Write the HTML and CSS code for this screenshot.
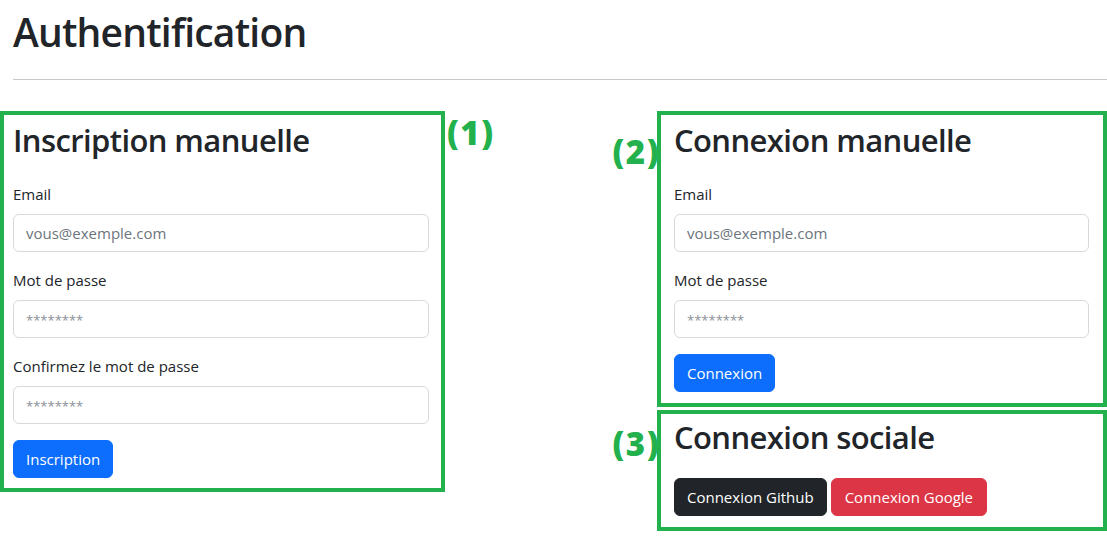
FILE: index.html
```html
<!DOCTYPE html>
<html lang="fr">
<head>
<meta charset="utf-8">
<title>Authentification</title>
<link rel="stylesheet" href="styles.css">
</head>
<body>
<header class="page-head">
  <h1 class="page-title">Authentification</h1>
  <hr class="page-rule">
</header>
<main class="columns">
  <section class="box box-signup">
    <span class="tag tag-right">(1)</span>
    <h2 class="box-title">Inscription manuelle</h2>
    <form class="form">
      <div class="field">
        <label class="label">Email</label>
        <input class="input" type="email" placeholder="vous@exemple.com">
      </div>
      <div class="field">
        <label class="label">Mot de passe</label>
        <input class="input" type="password" placeholder="********">
      </div>
      <div class="field">
        <label class="label">Confirmez le mot de passe</label>
        <input class="input" type="password" placeholder="********">
      </div>
      <button class="btn btn-primary" type="button">Inscription</button>
    </form>
  </section>
  <div class="right-col">
    <section class="box box-login">
      <span class="tag tag-left tag-2">(2)</span>
      <h2 class="box-title">Connexion manuelle</h2>
      <form class="form">
        <div class="field">
          <label class="label">Email</label>
          <input class="input" type="email" placeholder="vous@exemple.com">
        </div>
        <div class="field">
          <label class="label">Mot de passe</label>
          <input class="input" type="password" placeholder="********">
        </div>
        <button class="btn btn-primary" type="button">Connexion</button>
      </form>
    </section>
    <section class="box box-social">
      <span class="tag tag-left tag-3">(3)</span>
      <h2 class="box-title">Connexion sociale</h2>
      <div class="social-btns">
        <button class="btn btn-dark" type="button">Connexion Github</button>
        <button class="btn btn-danger" type="button">Connexion Google</button>
      </div>
    </section>
  </div>
</main>
</body>
</html>
```

FILE: styles.css
```css
* { box-sizing: border-box; }

html, body {
  margin: 0;
  padding: 0;
  background: #fff;
}

body {
  font-family: "Open Sans", "Noto Sans", "Liberation Sans", sans-serif;
  font-size: 16px;
  line-height: 24px;
  color: #212529;
  width: 1107px;
  overflow: hidden;
}

.page-head {
  padding: 8px 0 0 13px;
}

.page-title {
  margin: 0;
  font-size: 39px;
  line-height: 48px;
  font-weight: 600;
  letter-spacing: -0.8px;
}

.page-rule {
  margin: 23px 0 0 0;
  border: 0;
  border-top: 1px solid #c8c8c8;
  height: 0;
}

.columns {
  display: flex;
  justify-content: space-between;
  align-items: flex-start;
  margin-top: 31px;
}

.box {
  position: relative;
  border: 4px solid #22b14c;
}

.box-signup {
  width: 445px;
  padding: 6px 12px 10px 9px;
}

.right-col {
  width: 450px;
  display: flex;
  flex-direction: column;
  gap: 3px;
}

.box-login {
  padding: 6px 14px 11px 13px;
}

.box-social {
  padding: 4px 14px 11px 13px;
}

.box-title {
  margin: 0 0 23px 0;
  font-size: 31px;
  line-height: 38px;
  font-weight: 600;
  letter-spacing: -0.6px;
}

.box-social .box-title {
  margin-bottom: 22px;
}

.form {
  display: flex;
  flex-direction: column;
  align-items: flex-start;
}

.field {
  width: 100%;
  margin-bottom: 16px;
}

.label {
  display: block;
  margin-bottom: 8px;
  font-size: 15px;
}

.input {
  display: block;
  width: 100%;
  height: 38px;
  padding: 6px 12px;
  font-family: inherit;
  font-size: 15px;
  color: #212529;
  background: #fff;
  border: 1px solid #d6d9de;
  border-radius: 6px;
  outline: none;
}

.input::placeholder {
  color: #6c757d;
}

.input[type="password"]::placeholder {
  color: #8a9097;
  font-size: 13px;
}

.btn {
  display: inline-block;
  height: 38px;
  padding: 6px 12px;
  font-family: inherit;
  font-size: 15px;
  line-height: 24px;
  color: #fff;
  border: 1px solid transparent;
  border-radius: 6px;
  cursor: pointer;
}

.btn-primary { background: #0d6efd; border-color: #0d6efd; }
.btn-dark { background: #212529; border-color: #212529; }
.btn-danger { background: #dc3545; border-color: #dc3545; }

.btn-danger { padding: 6px 13px; }

.social-btns {
  display: flex;
  gap: 4px;
}

.tag {
  position: absolute;
  font-family: "Open Sans", "Noto Sans", sans-serif;
  font-weight: 800;
  font-size: 33px;
  line-height: 36px;
  color: #22b14c;
  letter-spacing: 1.5px;
}

.tag-right {
  left: 443px;
  top: 0;
}

.tag-left {
  right: calc(100% + 1px);
}

.tag-2 { top: 19px; }
.tag-3 { top: 12px; }
```
